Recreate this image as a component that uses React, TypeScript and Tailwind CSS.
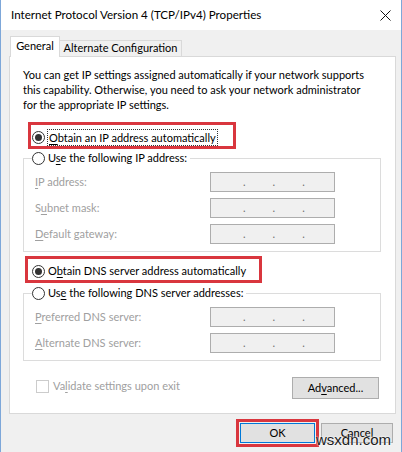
import React from "react";

const Radio = ({ checked }: { checked?: boolean }) => (
  <span className="w-[13px] h-[13px] rounded-full border border-[#333333] bg-white flex items-center justify-center shrink-0">
    {checked && <span className="w-[7px] h-[7px] rounded-full bg-[#333333]" />}
  </span>
);

const IpBox = () => (
  <div className="w-[125px] h-[20px] border border-[#adadad] bg-[#f0f0f0] flex pl-[32px] gap-[27px] text-[#707070] leading-[17px]">
    <span>.</span>
    <span>.</span>
    <span>.</span>
  </div>
);

const Field = ({ label }: { label: React.ReactNode }) => (
  <div className="flex items-center h-[20px] pl-[11px]">
    <span className="w-[175px] text-[#a0a0a0]">{label}</span>
    <IpBox />
  </div>
);

const u = (c: string) => <span className="underline underline-offset-[2px]">{c}</span>;

const App = () => {
  return (
    <div className="w-[402px] h-[452px] bg-[#f0f0f0] border-x border-[#7da7d9] font-['Lato','Segoe_UI',sans-serif] text-[11px] text-black whitespace-nowrap relative overflow-hidden">
      {/* title bar */}
      <div className="h-[30px] bg-white flex items-center justify-between pl-[10px] pr-[10px]">
        <span className="text-[11.6px]">Internet Protocol Version 4 (TCP/IPv4) Properties</span>
        <svg width="11" height="11" viewBox="0 0 11 11" className="mt-[1px]">
          <path d="M0.5 0.5L10.5 10.5M10.5 0.5L0.5 10.5" stroke="#111" strokeWidth="1" />
        </svg>
      </div>

      <div className="pl-[8px] pt-[6px]">
        {/* tabs */}
        <div className="flex items-end h-[21px] -mb-px relative z-10 pl-[1px]">
          <div className="h-[21px] w-[50px] bg-white border-t border-x border-[#d9d9d9] flex items-center justify-center pb-[1px]">
            General
          </div>
          <div className="h-[17px] w-[122px] bg-[#f0f0f0] border-t border-r border-b border-[#d9d9d9] flex items-center justify-center">
            Alternate Configuration
          </div>
        </div>

        {/* tab page */}
        <div className="w-[387px] h-[358px] bg-white border border-[#d9d9d9] pt-[10px]">
          <p className="pl-[13px] leading-[15px]">
            You can get IP settings assigned automatically if your network supports
            <br />
            this capability. Otherwise, you need to ask your network administrator
            <br />
            for the appropriate IP settings.
          </p>

          <div className="ml-[18px] mt-[10px] w-[208px] h-[27px] border-[3px] border-[#d9363e]">
            <div className="flex items-center h-full pt-[4px] pl-[1px] gap-[2px]">
              <Radio checked />
              <span className="border border-dotted border-[#333333] px-[1px] leading-[15px]">
                {u("O")}btain an IP address automatically
              </span>
            </div>
          </div>

          <fieldset className="ml-[13px] mt-[1px] w-[358px] border border-[#dcdcdc] pb-[7px]">
            <legend className="ml-[8px] pr-[3px]">
              <span className="flex items-center h-[16px] gap-[3px]">
                <Radio />
                <span>U{u("s")}e the following IP address:</span>
              </span>
            </legend>
            <div className="flex flex-col gap-[6px] mt-[6px]">
              <Field label={<>{u("I")}P address:</>} />
              <Field label={<>S{u("u")}bnet mask:</>} />
              <Field label={<>{u("D")}efault gateway:</>} />
            </div>
          </fieldset>

          <div className="ml-[15px] mt-[4px] w-[237px] h-[27px] border-[3px] border-[#d9363e]">
            <div className="flex items-center h-full pt-[4px] pl-[4px] gap-[3px]">
              <Radio checked />
              <span>O{u("b")}tain DNS server address automatically</span>
            </div>
          </div>

          <fieldset className="ml-[13px] mt-[2px] w-[358px] border border-[#dcdcdc] pb-[7px]">
            <legend className="ml-[8px] pr-[3px]">
              <span className="flex items-center h-[16px] gap-[3px]">
                <Radio />
                <span>Us{u("e")} the following DNS server addresses:</span>
              </span>
            </legend>
            <div className="flex flex-col gap-[6px] mt-[6px]">
              <Field label={<>{u("P")}referred DNS server:</>} />
              <Field label={<>{u("A")}lternate DNS server:</>} />
            </div>
          </fieldset>

          <div className="flex justify-between items-start mt-[16px] pl-[26px] pr-[16px]">
            <div className="flex items-center gap-[4px] mt-[1px]">
              <span className="w-[13px] h-[13px] border border-[#cccccc] bg-white" />
              <span className="text-[#a0a0a0]">Va{u("l")}idate settings upon exit</span>
            </div>
            <button className="w-[87px] h-[22px] bg-[#e1e1e1] border border-[#adadad]">
              Ad{u("v")}anced...
            </button>
          </div>
        </div>

        {/* dialog buttons */}
        <div className="flex justify-end items-center mt-[5px] pr-[8px] gap-[2px]">
          <div className="border-[3px] border-[#d9363e] p-px">
            <button className="w-[75px] h-[20px] bg-[#e1e1e1] border border-[#0078d7] block">OK</button>
          </div>
          <button className="w-[72px] h-[20px] bg-[#e1e1e1] border border-[#adadad]">Cancel</button>
        </div>
      </div>

      <span className="absolute right-[10px] bottom-[5px] text-[15px] leading-none text-[#1a1a1a] font-['Liberation_Sans',sans-serif] [text-shadow:0_0_2px_#fff,0_0_2px_#fff]">
        wsxdn.com
      </span>
    </div>
  );
};

export default App;
